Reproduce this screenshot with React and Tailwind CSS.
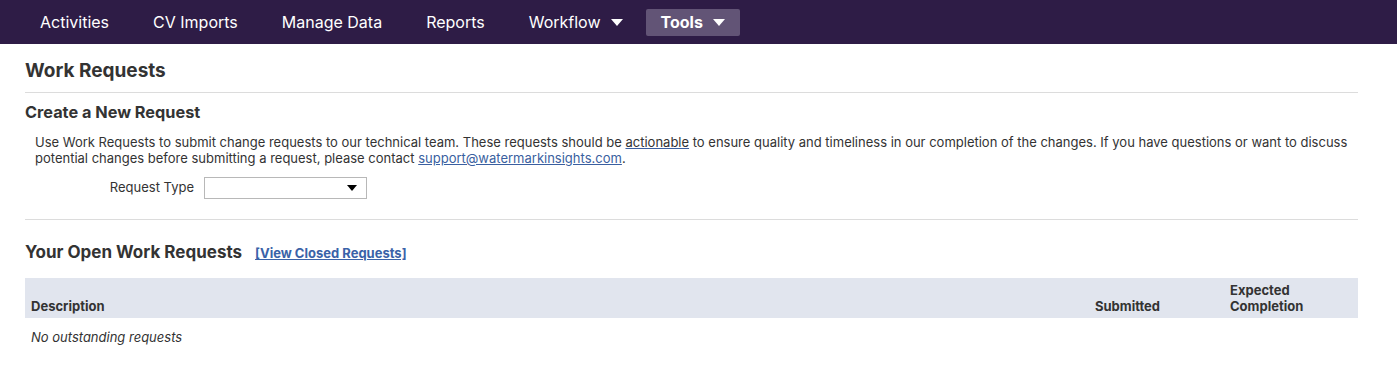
import React from 'react';

const navItems = [
  { label: 'Activities' },
  { label: 'CV Imports' },
  { label: 'Manage Data' },
  { label: 'Reports' },
  { label: 'Workflow', caret: true },
];

const Caret = () => (
  <svg width="12" height="8" viewBox="0 0 12 8" className="ml-[10px] mt-[2px]">
    <path d="M0 0 H12 L6 7 Z" fill="currentColor" />
  </svg>
);

const App = () => {
  return (
    <div className="min-h-[391px] bg-white text-[#333] font-['Inter','Liberation_Sans',sans-serif]">
      {/* Top navigation */}
      <nav className="h-[44px] bg-[#2e1c46] flex items-center pl-[18px] text-white text-[16px]">
        {navItems.map((item) => (
          <div key={item.label} className="flex items-center px-[22px] h-full">
            {item.label}
            {item.caret && <Caret />}
          </div>
        ))}
        <div className="ml-[1px] flex items-center h-[27px] px-[15px] rounded-[2px] bg-[#625476] font-bold">
          Tools
          <Caret />
        </div>
      </nav>

      <div className="pl-[25px] pr-[39px]">
        <h1 className="text-[19px] font-bold leading-[22px] pt-[16px] pb-[10px] border-b border-[#dcdcdc]">
          Work Requests
        </h1>

        <h2 className="text-[16.3px] font-bold leading-[20px] mt-[9px]">Create a New Request</h2>

        <p className="text-[13px] leading-[16px] px-[10px] mt-[12px]">
          Use Work Requests to submit change requests to our technical team. These requests should be{' '}
          <a href="#" className="underline decoration-[#3a5fa0]">actionable</a> to ensure quality and timeliness in our
          completion of the changes. If you have questions or want to discuss potential changes before submitting a
          request, please contact{' '}
          <a href="#" className="underline text-[#3a5fa0]">support@watermarkinsights.com</a>.
        </p>

        <div className="flex items-center mt-[11px] text-[13px]">
          <label className="w-[169px] text-right">Request Type</label>
          <div className="ml-[10px] w-[163px] h-[22px] border border-[#b8b8b8] bg-white flex items-center justify-end pr-[9px]">
            <svg width="10" height="6" viewBox="0 0 10 6">
              <path d="M0 0 H10 L5 6 Z" fill="#000" />
            </svg>
          </div>
        </div>

        <div className="border-b border-[#dcdcdc] mt-[20px]" />

        <div className="flex items-baseline mt-[22px]">
          <h2 className="text-[17px] font-bold leading-[20px]">Your Open Work Requests</h2>
          <a href="#" className="ml-[13px] text-[13px] font-bold underline text-[#3a62a8]">
            [View Closed Requests]
          </a>
        </div>

        <div className="mt-[14px] grid grid-cols-[1fr_135px_134px] items-end bg-[#e1e5ee] h-[40px] pb-[4px] text-[13px] font-bold leading-[16px]">
          <div className="pl-[6px]">Description</div>
          <div className="pl-[6px]">Submitted</div>
          <div className="pl-[6px]">
            Expected
            <br />
            Completion
          </div>
        </div>
        <div className="pl-[6px] pt-[11px] text-[13px] italic leading-[16px]">No outstanding requests</div>
      </div>
    </div>
  );
};

export default App;
